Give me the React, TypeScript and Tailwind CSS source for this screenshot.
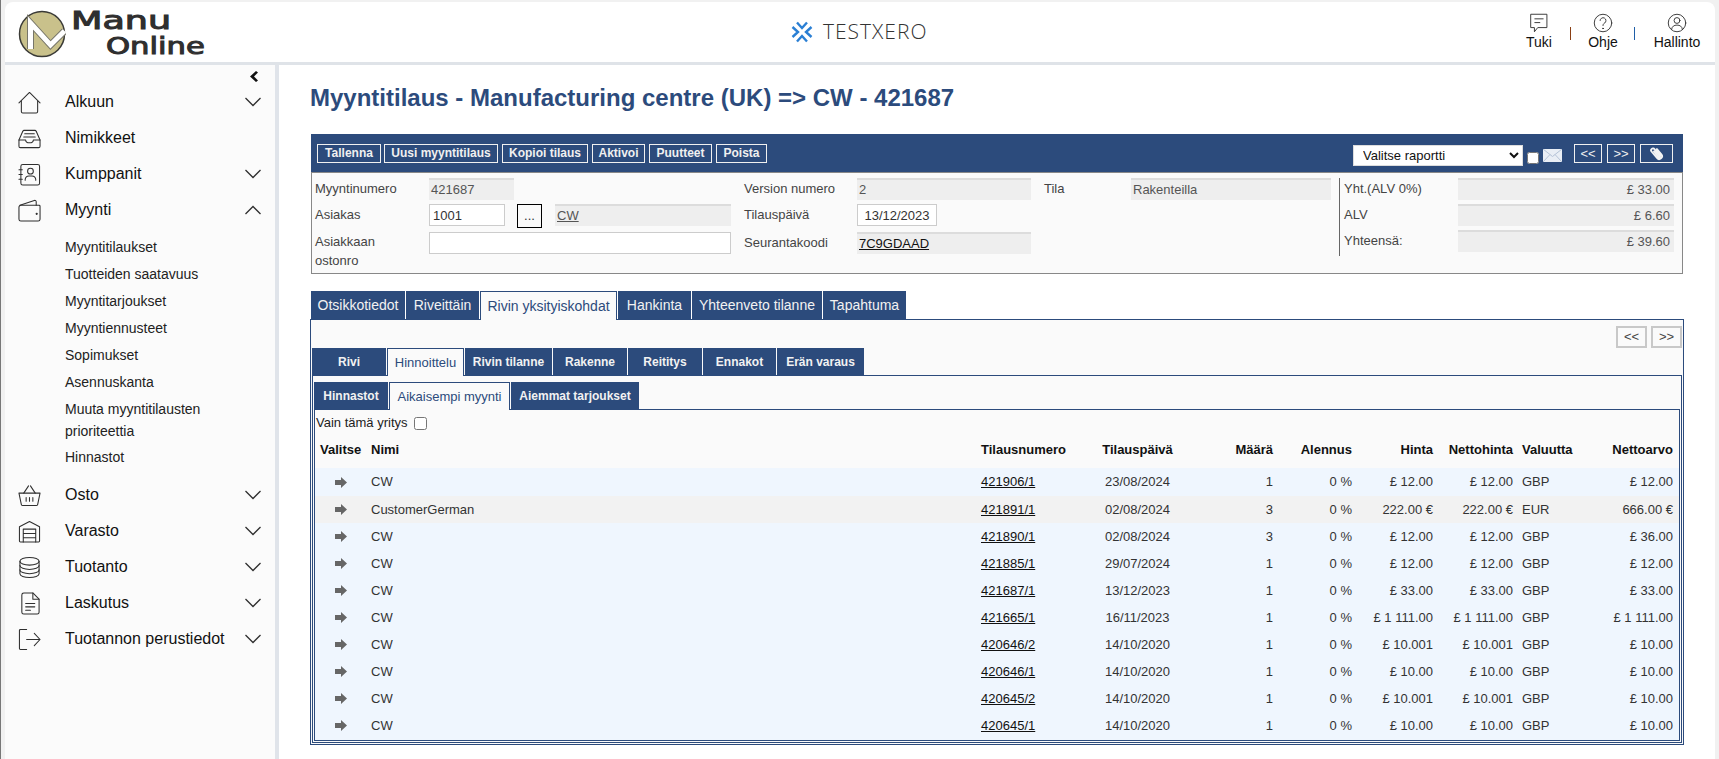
import type { ReactNode } from 'react'

const sans = "font-['Liberation_Sans',Arial,sans-serif]"

function Ico({ children, w = 24, h = 24 }: { children: ReactNode; w?: number; h?: number }) {
  return (
    <svg width={w} height={h} viewBox="0 0 24 24" fill="none" stroke="#2f2f2f" strokeWidth="1.1" strokeLinecap="round" strokeLinejoin="round" className="shrink-0">
      {children}
    </svg>
  )
}

const icons: Record<string, ReactNode> = {
  home: <><path d="M1 12.5 12 1.5l11 11" /><path d="M3.5 10.5V21.5a1.5 1.5 0 0 0 1.5 1.5h14a1.5 1.5 0 0 0 1.5-1.5V10.5" /></>,
  inbox: <><path d="M1 13.5 5 4.5a1.5 1.5 0 0 1 1.4-1h11.2a1.5 1.5 0 0 1 1.4 1l4 9" /><path d="M1 13.5V20a1.5 1.5 0 0 0 1.5 1.5h19A1.5 1.5 0 0 0 23 20v-6.500H16a4 3 0 0 1-8 0Z" /><path d="M7 7h10M6 10.500h12" /></>,
  partner: <><rect x="3" y="1.500" width="19.500" height="21.500" rx="2" /><path d="M1 7h3.500M1 12h3.500M1 17h3.500" /><circle cx="13" cy="8.500" r="3" /><path d="M7.500 18v-1a4 4 0 0 1 4-3.500h3a4 4 0 0 1 4 3.500v1" /></>,
  wallet: <><path d="M1 8.500a2 2 0 0 1 2-2h19a1 1 0 0 1 1 1V21a2 2 0 0 1-2 2H3a2 2 0 0 1-2-2Z" /><path d="M2 6.500 17 1.500a1.500 1.500 0 0 1 2 1.500v3.500" /><circle cx="19.500" cy="15.500" r="0.600" fill="#2f2f2f" /></>,
  basket: <><path d="M1 9.500h22l-2.500 12a1.500 1.500 0 0 1-1.500 1H5a1.500 1.500 0 0 1-1.500-1Z" /><path d="M6 9.500 11 2M18 9.500 13 2M8.500 14v4M12 14v4M15.500 14v4" /></>,
  garage: <><path d="M1.500 22V7L12 1.500 22.500 7v15a1 1 0 0 1-1 1h-19a1 1 0 0 1-1-1Z" /><path d="M5.500 23V9.500h13V23M5.500 14h13M5.500 18.500h13" /></>,
  db: <><ellipse cx="12" cy="5.500" rx="10" ry="4" /><path d="M2 5.500v13c0 2.200 4.500 4 10 4s10-1.800 10-4v-13" /><path d="M2 10c0 2.200 4.500 4 10 4s10-1.800 10-4M2 14.500c0 2.200 4.500 4 10 4s10-1.800 10-4" /></>,
  doc: <><path d="M4 3a2 2 0 0 1 2-2h9.500L22 7.500V21a2 2 0 0 1-2 2H6a2 2 0 0 1-2-2Z" /><path d="M15.500 1v6.500H22M8 12h9.500M8 15.500h9.500M8 19h5" /></>,
  exit: <><path d="M9 1.500H2.500a1 1 0 0 0-1 1V21.500a1 1 0 0 0 1 1H9" /><path d="M9 12h14M17 5.500l6 6.500-6 6.500" /></>,
}

function Chevron({ up }: { up?: boolean }) {
  return (
    <svg width="16" height="10" viewBox="0 0 16 10" fill="none" stroke="#2f2f2f" strokeWidth="1.3" className="ml-auto mr-[14px] shrink-0">
      <path d={up ? 'M0.500 9 8 1.500 15.500 9' : 'M0.500 1 8 8.500 15.500 1'} />
    </svg>
  )
}

function NavItem({ icon, label, chevron = true, up }: { icon: string; label: string; chevron?: boolean; up?: boolean }) {
  return (
    <div className="flex items-center h-[36px] pl-[13px] text-[16px] text-[#111]">
      <Ico w={23} h={23}>{icons[icon]}</Ico>
      <span className="ml-[24px]">{label}</span>
      {chevron && <Chevron up={up} />}
    </div>
  )
}

function Sidebar() {
  const subs = ['Myyntitilaukset', 'Tuotteiden saatavuus', 'Myyntitarjoukset', 'Myyntiennusteet', 'Sopimukset', 'Asennuskanta']
  return (
    <aside className="w-[270px] shrink-0 bg-[#fbfbfb]">
      <div className="h-[19px] flex items-end justify-end pr-[17px]">
        <svg width="8" height="11" viewBox="0 0 8 11" fill="#111" className="mb-[2px]"><path d="M6 0 0 5.500 6 11 8 9.500 4 5.500 8 1.500Z" /></svg>
      </div>
      <NavItem icon="home" label="Alkuun" />
      <NavItem icon="inbox" label="Nimikkeet" chevron={false} />
      <NavItem icon="partner" label="Kumppanit" />
      <NavItem icon="wallet" label="Myynti" up />
      <div className="pt-[6px] pb-[6px] pl-[60px] text-[14px] text-[#222]">
        {subs.map((s) => (
          <div key={s} className="h-[27px] leading-[27px]">{s}</div>
        ))}
        <div className="w-[170px] leading-[22px] mt-[2px] mb-[2px]">Muuta myyntitilausten prioriteettia</div>
        <div className="h-[27px] leading-[27px]">Hinnastot</div>
      </div>
      <NavItem icon="basket" label="Osto" />
      <NavItem icon="garage" label="Varasto" />
      <NavItem icon="db" label="Tuotanto" />
      <NavItem icon="doc" label="Laskutus" />
      <NavItem icon="exit" label="Tuotannon perustiedot" />
    </aside>
  )
}

function HeaderLink({ label, width, children }: { label: string; width: string; children: ReactNode }) {
  return (
    <div className={`flex flex-col items-center ${width}`}>
      <Ico w={20} h={20}>{children}</Ico>
      <span className="mt-[1px] text-[14px] leading-[16px] text-[#111]">{label}</span>
    </div>
  )
}

function Header() {
  return (
    <header className="h-[60px] shrink-0 bg-white rounded-t-[8px] flex">
      <div className="w-[786px] shrink-0 flex pl-[13px] pt-[8px]">
        <svg width="48" height="48" viewBox="0 0 48 48" className="shrink-0">
          <circle cx="24" cy="24" r="22.500" fill="#c9c18b" stroke="#3a3a36" strokeWidth="1.500" />
          <path d="M12.500 39V13l20 22 14-14" fill="none" stroke="#77766a" strokeWidth="7" />
          <path d="M12.500 39V13l20 22 14-14" fill="none" stroke="#fff" strokeWidth="5" />
        </svg>
        <div className="ml-[5px] font-['DejaVu_Sans',sans-serif] text-[#2f2f2f] [-webkit-text-stroke:1px_#2f2f2f]">
          <div className="mt-[1px] w-fit origin-left scale-x-[1.52] text-[24px] leading-[20px]">Manu</div>
          <div className="mt-[5px] ml-[35px] w-fit origin-left scale-x-[1.36] text-[22.5px] leading-[20px]">Online</div>
        </div>
      </div>
      <div className="flex items-center h-[60px]">
        <svg width="22" height="22" viewBox="0 0 22 22" fill="none" stroke="#2a7fd4" strokeWidth="2.400">
          <path d="M6 1.500 11 7l5-5.500M6 20.500 11 15l5 5.500M1.500 6 7 11l-5.500 5M20.500 6 15 11l5.500 5" />
        </svg>
        <span className="ml-[10px] font-['Open_Sans',sans-serif] font-light text-[21px] tracking-[1px] text-[#333]">TESTXERO</span>
      </div>
      <div className="ml-auto flex pr-[13px] pt-[11px]">
        <HeaderLink label="Tuki" width="w-[40px]">
          <path d="M2.500 1.500h19v16H10.500l-4 5v-5h-4Z" /><path d="M7 7h10M7 11.500h6" />
        </HeaderLink>
        <div className="w-px h-[13px] mt-[14px] ml-[11px] bg-[#8a3f14]" />
        <HeaderLink label="Ohje" width="w-[40px] ml-[12px]">
          <circle cx="12" cy="12" r="10.500" /><path d="M8.500 9a3.500 3.500 0 1 1 5.500 3c-1.300.8-2 1.500-2 3" /><circle cx="12" cy="18.500" r="0.500" fill="#2f2f2f" />
        </HeaderLink>
        <div className="w-px h-[13px] mt-[14px] ml-[11px] bg-[#1f5fa8]" />
        <HeaderLink label="Hallinto" width="w-[50px] ml-[17px]">
          <circle cx="12" cy="12" r="10.500" /><circle cx="12" cy="9" r="3.500" /><path d="M5.500 19.500c.5-3.500 3-5 6.500-5s6 1.500 6.500 5" />
        </HeaderLink>
      </div>
    </header>
  )
}

function ToolButton({ children, width }: { children: ReactNode; width: string }) {
  return (
    <button className={`h-[19px] ${width} border border-[#f0f0f0] text-[12px] font-bold leading-[17px] text-[#f0f0f0] flex items-center justify-center`}>
      {children}
    </button>
  )
}

function Toolbar() {
  return (
    <div className="h-[38px] mx-px bg-[#2c4b7c] flex items-start pt-[10px] pl-[6px]">
      <div className="flex gap-[4px]">
        <ToolButton width="w-[64px] -mr-px">Tallenna</ToolButton>
        <ToolButton width="w-[114px]">Uusi myyntitilaus</ToolButton>
        <ToolButton width="w-[86px]">Kopioi tilaus</ToolButton>
        <ToolButton width="w-[53px]">Aktivoi</ToolButton>
        <ToolButton width="w-[63px]">Puutteet</ToolButton>
        <ToolButton width="w-[51px]">Poista</ToolButton>
      </div>
      <div className="ml-auto flex items-start pr-[10px]">
        <select className="w-[170px] h-[21px] mt-px bg-white border border-[#ddd] text-[13px] text-[#111] pl-[5px]">
          <option>Valitse raportti</option>
        </select>
        <input type="checkbox" className="w-[12px] h-[12px] mt-[8px] ml-[4px]" />
        <svg width="19" height="13" viewBox="0 0 19 13" className="ml-[4px] mt-[5px]">
          <rect width="19" height="13" fill="#e9eef5" />
          <path d="M0 0 9.500 7.500 19 0M0 13 7 5.500M19 13 12 5.500" fill="none" stroke="#b4c2d6" />
        </svg>
        <div className="flex gap-[5px] ml-[12px]">
          <ToolButton width="w-[28px]"><span className="font-normal text-[13px]">&lt;&lt;</span></ToolButton>
          <ToolButton width="w-[28px]"><span className="font-normal text-[13px]">&gt;&gt;</span></ToolButton>
          <ToolButton width="w-[33px]">
            <svg width="15" height="15" viewBox="0 0 24 24" fill="none" stroke="#f4f4f4" strokeWidth="3" strokeLinecap="round">
              <path transform="rotate(-40 12 12)" d="M11 7v11a1.500 1.500 0 0 0 3 0V4.500a3 3 0 0 0-6 0V18a4.500 4.500 0 0 0 9 0V7" />
            </svg>
          </ToolButton>
        </div>
      </div>
    </div>
  )
}

function ReadOnly({ children, width, right }: { children: ReactNode; width: string; right?: boolean }) {
  return (
    <div className={`${width} h-[22px] bg-[#eeeeee] border-t-2 border-[#dcdcdc] text-[13px] leading-[19px] text-[#555] ${right ? 'text-right pr-[4px]' : 'pl-[2px]'}`}>
      {children}
    </div>
  )
}

function Label({ children, width }: { children: ReactNode; width: string }) {
  return <div className={`${width} shrink-0 text-[13px] leading-[22px] text-[#444]`}>{children}</div>
}

function OrderForm() {
  return (
    <div className="h-[102px] mx-px border border-[#888] bg-[#fafafa] flex pt-[5px] text-[13px]">
      <div className="w-[432px] shrink-0 pl-[3px]">
        <div className="flex">
          <Label width="w-[114px]">Myyntinumero</Label>
          <ReadOnly width="w-[85px]">421687</ReadOnly>
        </div>
        <div className="flex mt-[4px]">
          <Label width="w-[114px]">Asiakas</Label>
          <input readOnly value="1001" className="w-[76px] h-[22px] border border-[#ccc] bg-white px-[3px] text-[13px] text-[#333]" />
          <button className="w-[25px] h-[24px] ml-[12px] border border-black bg-[#fafafa] text-[13px] text-[#333] leading-[22px]">...</button>
          <ReadOnly width="w-[176px] ml-[13px]"><span className="underline">CW</span></ReadOnly>
        </div>
        <div className="flex mt-[4px]">
          <div className="w-[114px] shrink-0 pr-[30px] text-[13px] leading-[19px] text-[#444]">Asiakkaan ostonro</div>
          <input readOnly className="w-[302px] h-[22px] border border-[#ccc] bg-white" />
        </div>
      </div>
      <div className="w-[300px] shrink-0">
        <div className="flex">
          <Label width="w-[113px]">Version numero</Label>
          <ReadOnly width="w-[174px]">2</ReadOnly>
        </div>
        <div className="flex mt-[4px]">
          <Label width="w-[113px]">Tilauspäivä</Label>
          <input readOnly value="13/12/2023" className="w-[80px] h-[22px] border border-[#ccc] bg-white text-center text-[13px] text-[#333]" />
        </div>
        <div className="flex mt-[6px]">
          <Label width="w-[113px]">Seurantakoodi</Label>
          <ReadOnly width="w-[174px]"><span className="underline text-[#111]">7C9GDAAD</span></ReadOnly>
        </div>
      </div>
      <div className="w-[295px] shrink-0 flex">
        <Label width="w-[87px]">Tila</Label>
        <ReadOnly width="w-[200px]">Rakenteilla</ReadOnly>
      </div>
      <div className="h-[78px] border-l border-[#666] pl-[4px]">
        {[['Yht.(ALV 0%)', '£ 33.00'], ['ALV', '£ 6.60'], ['Yhteensä:', '£ 39.60']].map(([l, v]) => (
          <div key={l} className="flex mb-[4px]">
            <Label width="w-[114px]">{l}</Label>
            <ReadOnly width="w-[216px]" right>{v}</ReadOnly>
          </div>
        ))}
      </div>
    </div>
  )
}

function Tab({ label, width, active, size }: { label: string; width: string; active?: boolean; size: string }) {
  if (active) {
    return (
      <div className={`${width} ${size} font-normal relative z-10 -mb-px bg-[#fafafa] border border-b-0 border-[#2c4b7c] text-[#2c4b7c] flex items-center justify-center whitespace-nowrap`}>
        {label}
      </div>
    )
  }
  return <div className={`${width} ${size} bg-[#2c4b7c] text-[#f2f2f2] flex items-center justify-center whitespace-nowrap`}>{label}</div>
}

type Row = [string, string, string, string, string, string, string, string]

const rows: Row[] = [
  ['CW', '421906/1', '23/08/2024', '1', '£ 12.00', '£ 12.00', 'GBP', '£ 12.00'],
  ['CustomerGerman', '421891/1', '02/08/2024', '3', '222.00 €', '222.00 €', 'EUR', '666.00 €'],
  ['CW', '421890/1', '02/08/2024', '3', '£ 12.00', '£ 12.00', 'GBP', '£ 36.00'],
  ['CW', '421885/1', '29/07/2024', '1', '£ 12.00', '£ 12.00', 'GBP', '£ 12.00'],
  ['CW', '421687/1', '13/12/2023', '1', '£ 33.00', '£ 33.00', 'GBP', '£ 33.00'],
  ['CW', '421665/1', '16/11/2023', '1', '£ 1 111.00', '£ 1 111.00', 'GBP', '£ 1 111.00'],
  ['CW', '420646/2', '14/10/2020', '1', '£ 10.001', '£ 10.001', 'GBP', '£ 10.00'],
  ['CW', '420646/1', '14/10/2020', '1', '£ 10.00', '£ 10.00', 'GBP', '£ 10.00'],
  ['CW', '420645/2', '14/10/2020', '1', '£ 10.001', '£ 10.001', 'GBP', '£ 10.00'],
  ['CW', '420645/1', '14/10/2020', '1', '£ 10.00', '£ 10.00', 'GBP', '£ 10.00'],
]

function SalesTable() {
  return (
    <table className="w-full table-fixed text-[13px] text-[#333]">
      <colgroup>
        <col className="w-[52px]" />
        <col className="w-[610px]" />
        <col className="w-[118px]" />
        <col className="w-[85px]" />
        <col className="w-[96px]" />
        <col className="w-[79px]" />
        <col className="w-[81px]" />
        <col className="w-[80px]" />
        <col className="w-[60px]" />
        <col />
      </colgroup>
      <thead>
        <tr className="h-[32px] font-bold text-[#111] bg-[#fafafa]">
          <th className="text-left pl-[5px] pb-[4px]">Valitse</th>
          <th className="text-left pl-[4px] pb-[4px]">Nimi</th>
          <th className="text-left pl-[4px] pb-[4px]">Tilausnumero</th>
          <th className="text-center pb-[4px]">Tilauspäivä</th>
          <th className="text-right pr-[3px] pb-[4px]">Määrä</th>
          <th className="text-right pr-[3px] pb-[4px]">Alennus</th>
          <th className="text-right pr-[3px] pb-[4px]">Hinta</th>
          <th className="text-right pr-[3px] pb-[4px]">Nettohinta</th>
          <th className="text-left pl-[6px] pb-[4px]">Valuutta</th>
          <th className="text-right pr-[6px] pb-[4px]">Nettoarvo</th>
        </tr>
      </thead>
      <tbody>
        {rows.map((r, i) => (
          <tr key={r[1]} className={`${i === 0 ? 'h-[28px]' : 'h-[27px]'} ${i === 1 ? 'bg-[#f2f2f2]' : 'bg-[#eff6fe]'}`}>
            <td className="pl-[20px]">
              <svg width="12" height="11" viewBox="0 0 12 11" fill="#666"><path d="M0 3h6V0l6 5.500L6 11V8H0Z" /></svg>
            </td>
            <td className="pl-[4px]">{r[0]}</td>
            <td className="pl-[4px] underline text-[#111]">{r[1]}</td>
            <td className="text-center">{r[2]}</td>
            <td className="text-right pr-[3px]">{r[3]}</td>
            <td className="text-right pr-[3px]">0 %</td>
            <td className="text-right pr-[3px] whitespace-nowrap">{r[4]}</td>
            <td className="text-right pr-[3px] whitespace-nowrap">{r[5]}</td>
            <td className="pl-[6px]">{r[6]}</td>
            <td className="text-right pr-[6px] whitespace-nowrap">{r[7]}</td>
          </tr>
        ))}
      </tbody>
    </table>
  )
}

function Details() {
  const nav = 'w-[31px] h-[22px] border-2 border-[#c8c8c8] bg-[#fafafa] text-[13px] text-[#444] flex items-center justify-center'
  return (
    <>
      <div className="flex gap-px ml-px mt-[17px] h-[28px]">
        <Tab size="text-[14px]" width="w-[94px]" label="Otsikkotiedot" />
        <Tab size="text-[14px]" width="w-[73px]" label="Riveittäin" />
        <Tab size="text-[14px]" width="w-[137px]" label="Rivin yksityiskohdat" active />
        <Tab size="text-[14px]" width="w-[73px]" label="Hankinta" />
        <Tab size="text-[14px]" width="w-[130px]" label="Yhteenveto tilanne" />
        <Tab size="text-[14px]" width="w-[83px]" label="Tapahtuma" />
      </div>
      <div className="border border-[#2c4b7c] bg-[#fafafa] px-px pb-px">
        <div className="flex justify-end gap-[4px] pt-[6px]">
          <button className={nav}>&lt;&lt;</button>
          <button className={nav}>&gt;&gt;</button>
        </div>
        <div className="flex gap-px h-[27px]">
          <Tab size="text-[12px] font-bold" width="w-[74px]" label="Rivi" />
          <Tab size="text-[13px]" width="w-[77px]" label="Hinnoittelu" active />
          <Tab size="text-[12px] font-bold" width="w-[87px]" label="Rivin tilanne" />
          <Tab size="text-[12px] font-bold" width="w-[74px]" label="Rakenne" />
          <Tab size="text-[12px] font-bold" width="w-[74px]" label="Reititys" />
          <Tab size="text-[12px] font-bold" width="w-[73px]" label="Ennakot" />
          <Tab size="text-[12px] font-bold" width="w-[87px]" label="Erän varaus" />
        </div>
        <div className="border border-[#2c4b7c] px-px pb-px pt-[6px]">
          <div className="flex gap-px h-[27px]">
            <Tab size="text-[12px] font-bold" width="w-[74px]" label="Hinnastot" />
            <Tab size="text-[13px]" width="w-[121px]" label="Aikaisempi myynti" active />
            <Tab size="text-[12px] font-bold" width="w-[128px]" label="Aiemmat tarjoukset" />
          </div>
          <div className="border border-[#2c4b7c] bg-[#eff6fe]">
            <div className="bg-[#fafafa]">
              <div className="h-[26px] flex items-center pl-[1px] text-[13px] text-[#222]">
                Vain tämä yritys
                <input type="checkbox" className="ml-[6px] w-[13px] h-[13px]" />
              </div>
            </div>
            <SalesTable />
            <div className="h-px" />
          </div>
        </div>
      </div>
    </>
  )
}

export default function App() {
  return (
    <div className={`${sans} h-screen overflow-hidden flex flex-col bg-[#f1f1f1] border-l border-[#777] pl-[4px] pr-[4px] pt-[2px]`}>
      <Header />
      <div className="flex flex-1 min-h-0 border-t-[3px] border-[#dfe3e8] bg-white">
        <Sidebar />
        <main className="flex-1 min-w-0 border-l-[4px] border-[#e0e4ea] pl-[31px] pr-[31px]">
          <h1 className="mt-[20px] mb-[23px] h-[26px] text-[24px] leading-[26px] font-bold text-[#2c4b7c] whitespace-nowrap">
            Myyntitilaus - Manufacturing centre (UK) =&gt; CW - 421687
          </h1>
          <Toolbar />
          <OrderForm />
          <Details />
        </main>
      </div>
    </div>
  )
}
